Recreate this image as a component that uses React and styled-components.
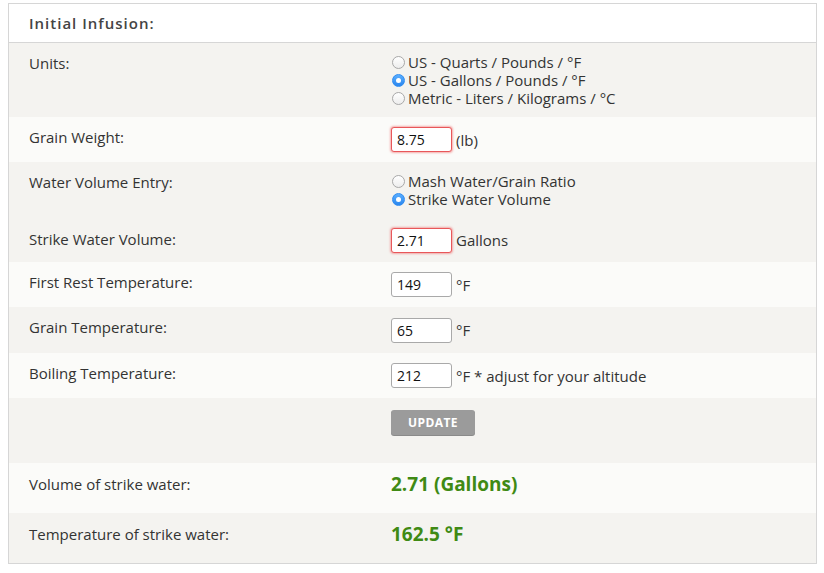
import React from 'react'
import styled, { createGlobalStyle } from 'styled-components'

const GlobalStyle = createGlobalStyle`
  body {
    margin: 0;
    background: #fff;
    font-family: "Open Sans", "Liberation Sans", sans-serif;
    color: #333;
  }
`

const Page = styled.div`
  padding: 3px 7px 0 8px;
`

const Panel = styled.div`
  border: 1px solid #d6d6d6;
  background: #fff;
`

const Heading = styled.div`
  height: 38px;
  display: flex;
  align-items: center;
  padding-left: 20px;
  border-bottom: 1px solid #d6d6d6;
  font-size: 15px;
  font-weight: 600;
  letter-spacing: 1px;
  color: #444;
`

const Row = styled.div`
  display: grid;
  grid-template-columns: 362px 1fr;
  padding: ${p => p.$pad || '10px'} 20px;
  background: ${p => (p.$shade ? '#f4f3f0' : '#fbfbf9')};
  min-height: ${p => p.$h || 'auto'};
  box-sizing: border-box;
  font-size: 15px;
  line-height: 18px;
`

const Label = styled.div`
  padding-top: ${p => p.$offset || '0'};
  color: #333;
`

const Value = styled.div`
  display: flex;
  flex-direction: ${p => (p.$stack ? 'column' : 'row')};
  align-items: ${p => (p.$stack ? 'flex-start' : 'center')};
`

const RadioLine = styled.label`
  display: flex;
  align-items: center;
  height: 18px;
  color: #333;
`

const Dot = styled.span`
  width: 13px;
  height: 13px;
  box-sizing: border-box;
  border-radius: 50%;
  margin: 0 3px 0 1px;
  border: 1px solid ${p => (p.$on ? '#2f8cf0' : '#a8a8a8')};
  background: ${p => (p.$on ? 'linear-gradient(#5aaeff, #2a86ee)' : 'linear-gradient(#fff, #ededed)')};
  display: flex;
  align-items: center;
  justify-content: center;
  &::after {
    content: '';
    display: ${p => (p.$on ? 'block' : 'none')};
    width: 5px;
    height: 5px;
    border-radius: 50%;
    background: #fff;
  }
`

const Field = styled.input`
  width: 61px;
  height: 25px;
  box-sizing: border-box;
  padding: 0 5px;
  border-radius: 3px;
  font-family: inherit;
  font-size: 14px;
  color: #111;
  background: #fff;
  border: 1px solid ${p => (p.$bad ? '#e8575a' : '#a9a9a9')};
  box-shadow: ${p => (p.$bad ? '0 0 2px 1px rgba(240, 110, 110, 0.55)' : 'none')};
  outline: none;
  margin-right: 4px;
`

const Unit = styled.span`
  color: #333;
`

const Button = styled.button`
  width: 84px;
  height: 25px;
  border: none;
  border-radius: 3px;
  background: #9b9b9b;
  color: #fff;
  font-family: inherit;
  font-weight: 700;
  font-size: 12px;
  letter-spacing: 0.4px;
  box-shadow: 0 1px 0 #8a8a8a;
`

const Result = styled.div`
  font-size: 19px;
  font-weight: 700;
  color: #3f8a14;
  line-height: 20px;
`

const Radio = ({ on, children }) => (
  <RadioLine>
    <Dot $on={on} />
    {children}
  </RadioLine>
)

export default function App() {
  return (
    <Page>
      <GlobalStyle />
      <Panel>
        <Heading>Initial Infusion:</Heading>

        <Row $shade $h="74px">
          <Label $offset="1px">Units:</Label>
          <Value $stack>
            <Radio>US - Quarts / Pounds / °F</Radio>
            <Radio on>US - Gallons / Pounds / °F</Radio>
            <Radio>Metric - Liters / Kilograms / °C</Radio>
          </Value>
        </Row>

        <Row $h="45px">
          <Label $offset="1px">Grain Weight:</Label>
          <Value>
            <Field $bad defaultValue="8.75" />
            <Unit>(lb)</Unit>
          </Value>
        </Row>

        <Row $shade $h="56px">
          <Label $offset="1px">Water Volume Entry:</Label>
          <Value $stack>
            <Radio>Mash Water/Grain Ratio</Radio>
            <Radio on>Strike Water Volume</Radio>
          </Value>
        </Row>

        <Row $shade $h="44px" $pad="1px">
          <Label $offset="11px">Strike Water Volume:</Label>
          <Value>
            <Field $bad defaultValue="2.71" />
            <Unit>Gallons</Unit>
          </Value>
        </Row>

        <Row $h="45px">
          <Label $offset="1px">First Rest Temperature:</Label>
          <Value>
            <Field defaultValue="149" />
            <Unit>°F</Unit>
          </Value>
        </Row>

        <Row $shade $h="46px">
          <Label $offset="1px">Grain Temperature:</Label>
          <Value>
            <Field defaultValue="65" />
            <Unit>°F</Unit>
          </Value>
        </Row>

        <Row $h="45px">
          <Label $offset="1px">Boiling Temperature:</Label>
          <Value>
            <Field defaultValue="212" />
            <Unit>°F * adjust for your altitude</Unit>
          </Value>
        </Row>

        <Row $shade $h="65px" $pad="12px">
          <Label />
          <Value $stack>
            <Button>UPDATE</Button>
          </Value>
        </Row>

        <Row $h="50px" $pad="11px">
          <Label $offset="1px">Volume of strike water:</Label>
          <Result>2.71 (Gallons)</Result>
        </Row>

        <Row $shade $h="50px" $pad="11px">
          <Label $offset="1px">Temperature of strike water:</Label>
          <Result>162.5 °F</Result>
        </Row>
      </Panel>
    </Page>
  )
}
